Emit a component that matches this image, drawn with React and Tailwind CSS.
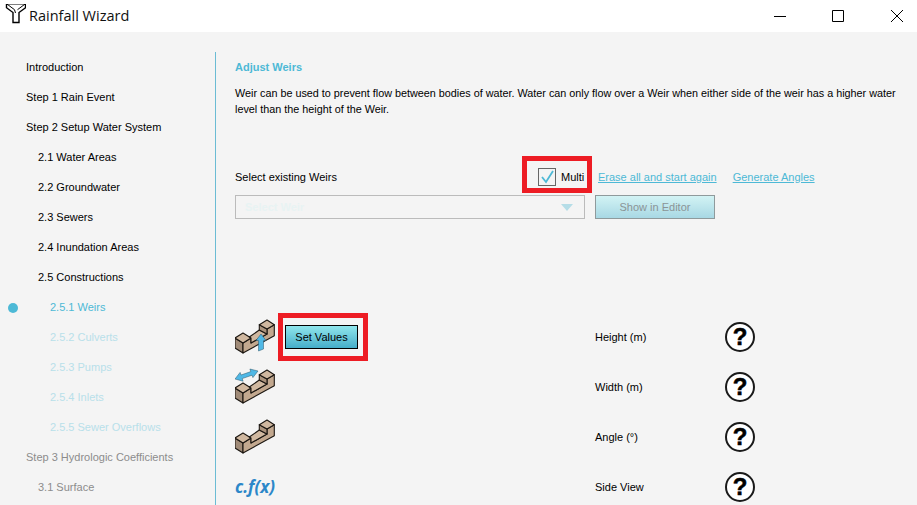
const sans = 'font-["Liberation_Sans",Arial,sans-serif]';

const nav = [
  { label: 'Introduction', indent: 'pl-[26px]', color: 'text-black' },
  { label: 'Step 1 Rain Event', indent: 'pl-[26px]', color: 'text-black' },
  { label: 'Step 2 Setup Water System', indent: 'pl-[26px]', color: 'text-black' },
  { label: '2.1 Water Areas', indent: 'pl-[38px]', color: 'text-black' },
  { label: '2.2 Groundwater', indent: 'pl-[38px]', color: 'text-black' },
  { label: '2.3 Sewers', indent: 'pl-[38px]', color: 'text-black' },
  { label: '2.4 Inundation Areas', indent: 'pl-[38px]', color: 'text-black' },
  { label: '2.5 Constructions', indent: 'pl-[38px]', color: 'text-black' },
  { label: '2.5.1 Weirs', indent: 'pl-[50px]', color: 'text-[#4db9d6]', active: true },
  { label: '2.5.2 Culverts', indent: 'pl-[50px]', color: 'text-[#b8e0ea]' },
  { label: '2.5.3 Pumps', indent: 'pl-[50px]', color: 'text-[#b8e0ea]' },
  { label: '2.5.4 Inlets', indent: 'pl-[50px]', color: 'text-[#b8e0ea]' },
  { label: '2.5.5 Sewer Overflows', indent: 'pl-[50px]', color: 'text-[#b8e0ea]' },
  { label: 'Step 3 Hydrologic Coefficients', indent: 'pl-[26px]', color: 'text-[#8c8c8c]' },
  { label: '3.1 Surface', indent: 'pl-[38px]', color: 'text-[#8c8c8c]' },
];

function Logo() {
  return (
    <svg width="24" height="24" viewBox="0 4 24 24" fill="none" stroke="#000" strokeWidth="1.400" className="shrink-0">
      <path d="M4.500 3.700h19v4l-6.500 4.800v10h-6v-10l-6.500-4.800z" fill="#fff" />
      <path d="M4.500 3.700l8 6 1 3.300M23.500 3.700l-8 6" strokeWidth="1" />
    </svg>
  );
}

function Weir({ arrow }) {
  return (
    <svg width="43" height="42" viewBox="0 0 43 42" stroke="#1c1712" strokeWidth="1.100" strokeLinejoin="round" className="shrink-0">
      <g transform="translate(0 4)">
        <path d="M0 18l8 5v10l-8-5z" fill="#a08b78" />
        <path d="M8 23l8-5v5l16-9V9l7.300-4.300v11L8 33z" fill="#c2a88f" />
        <path d="M0 18l8-5 8 5-8 5z" fill="#d0b8a0" />
        <path d="M14.300 17l10-7L32 14 16 23v-5z" fill="#d0b8a0" />
        <path d="M24.300 4.700V10L32 14V9z" fill="#ab937d" />
        <path d="M24.300 4.700L32 0l7.300 4.700L32 9z" fill="#d0b8a0" />
      </g>
      {arrow === 'up' && (
        <path d="M23.500 35V24.500H21L26 18l5 6.500h-2.500V33z" fill="#4fb8e6" stroke="#2b5568" strokeWidth="0.5" />
      )}
      {arrow === 'side' && (
        <path d="M0 13l5.100-6.600.9 2.600 9.800-3.400-.9-2.600 8.100 2-5.100 6.600-.9-2.400-9.800 3.400.9 2.600z" fill="#4fb8e6" stroke="#2b5568" strokeWidth="0.5" />
      )}
    </svg>
  );
}

function Help() {
  return (
    <div className={`${sans} w-[30px] h-[30px] rounded-full border-2 border-[#1a1a1a] bg-white flex items-center justify-center text-[24px] font-bold text-black leading-none [-webkit-text-stroke:0.5px_black]`}>
      ?
    </div>
  );
}

function Row({ label, children }) {
  return (
    <div className="grid grid-cols-[360px_130px_30px] h-[50px] items-center">
      <div className="flex items-center">{children}</div>
      <div className="text-[11px] text-black">{label}</div>
      <Help />
    </div>
  );
}

export default function App() {
  return (
    <div className={`${sans} w-[917px] h-[505px] overflow-hidden bg-[#f4f4f4] flex flex-col`}>
      <header className="h-8 bg-white flex items-center shrink-0">
        <div className="pl-[2px] w-[29px]"><Logo /></div>
        <div className="font-['Open_Sans',sans-serif] text-[14.500px] text-[#111] flex-1">Rainfall Wizard</div>
        <div className="flex gap-[19px]">
          <div className="w-[38px] flex justify-center">
            <svg width="12" height="12" viewBox="0 0 12 12" stroke="#000"><path d="M0 6.500h12" /></svg>
          </div>
          <div className="w-10 flex justify-center">
            <svg width="12" height="12" viewBox="0 0 12 12" fill="none" stroke="#000"><path d="M.5.500h11v11H.5z" /></svg>
          </div>
          <div className="w-10 flex justify-center">
            <svg width="12" height="12" viewBox="0 0 12 12" stroke="#000"><path d="M0 0l12 12M12 0L0 12" /></svg>
          </div>
        </div>
      </header>

      <div className="flex flex-1 pt-5 min-h-0">
        <nav className="w-[216px] shrink-0 border-r border-[#6bbcd4] text-[11px]">
          {nav.map((item) => (
            <div key={item.label} className={`h-[30px] pt-[1px] flex items-center relative ${item.indent} ${item.color}`}>
              {item.active && <span className="absolute left-2 w-2.5 h-2.5 rounded-full bg-[#4db9d6]" />}
              {item.label}
            </div>
          ))}
        </nav>

        <main className="flex-1 pl-[19px] min-w-0">
          <div className="h-[30px] pt-[1px] flex items-center text-[11px] font-bold text-[#4db9d6]">Adjust Weirs</div>
          <p className="mt-[3px] text-[10.800px] leading-4 text-black w-[665px]">
            Weir can be used to prevent flow between bodies of water. Water can only flow over a Weir when either side of the weir has a higher water level than the height of the Weir.
          </p>

          <div className="mt-[39px] h-[37px] flex items-center text-[11px]">
            <div className="w-[287px] pt-[5px] text-black">Select existing Weirs</div>
            <div className="w-[70px] h-[37px] border-[5px] border-[#ed1c24] flex items-center pt-[5px] pl-[11px] gap-[5px]">
              <span className="w-[18px] h-[18px] border border-[#666] flex items-center justify-center shrink-0">
                <svg width="14" height="14" viewBox="0 0 14 14" fill="none" stroke="#4db9d6" strokeWidth="1.800">
                  <path d="M2 7l4 5 7-11" />
                </svg>
              </span>
              <span className="text-black">Multi</span>
            </div>
            <a className="ml-[6px] pt-[5px] text-[#4db9d6] underline">Erase all and start again</a>
            <a className="ml-4 pt-[5px] text-[#4db9d6] underline">Generate Angles</a>
          </div>

          <div className="mt-[2px] flex gap-[10px] text-[11px]">
            <div className="w-[350px] h-6 border border-[#bbb] flex items-center justify-between pl-[9px] pr-[11px]">
              <span className="font-bold text-[#e8f3f3]">Select Weir</span>
              <span className="w-0 h-0 border-x-[6px] border-x-transparent border-t-[7px] border-t-[#b5dde7]" />
            </div>
            <div className="w-[120px] h-6 border border-[#8f9a9c] bg-gradient-to-b from-[#d2f3f4] to-[#a8d8e4] flex items-center justify-center text-[#8a9496]">
              Show in Editor
            </div>
          </div>

          <div className="mt-[93px]">
            <Row label="Height (m)">
              <div className="w-[43px]"><Weir arrow="up" /></div>
              <div className="w-[90px] h-[48px] border-[5px] border-[#ed1c24] flex items-center pl-[2px]">
                <div className="w-[73px] h-6 border border-black bg-gradient-to-b from-[#8fe6ec] to-[#45aec9] flex items-center justify-center text-[11px] text-black">
                  Set Values
                </div>
              </div>
            </Row>
            <Row label="Width (m)"><Weir arrow="side" /></Row>
            <Row label="Angle (°)"><Weir /></Row>
            <Row label="Side View">
              <span className="font-['Open_Sans',sans-serif] font-bold italic text-[17px] text-[#2b87c9]">c.f(x)</span>
            </Row>
          </div>
        </main>
      </div>
    </div>
  );
}
